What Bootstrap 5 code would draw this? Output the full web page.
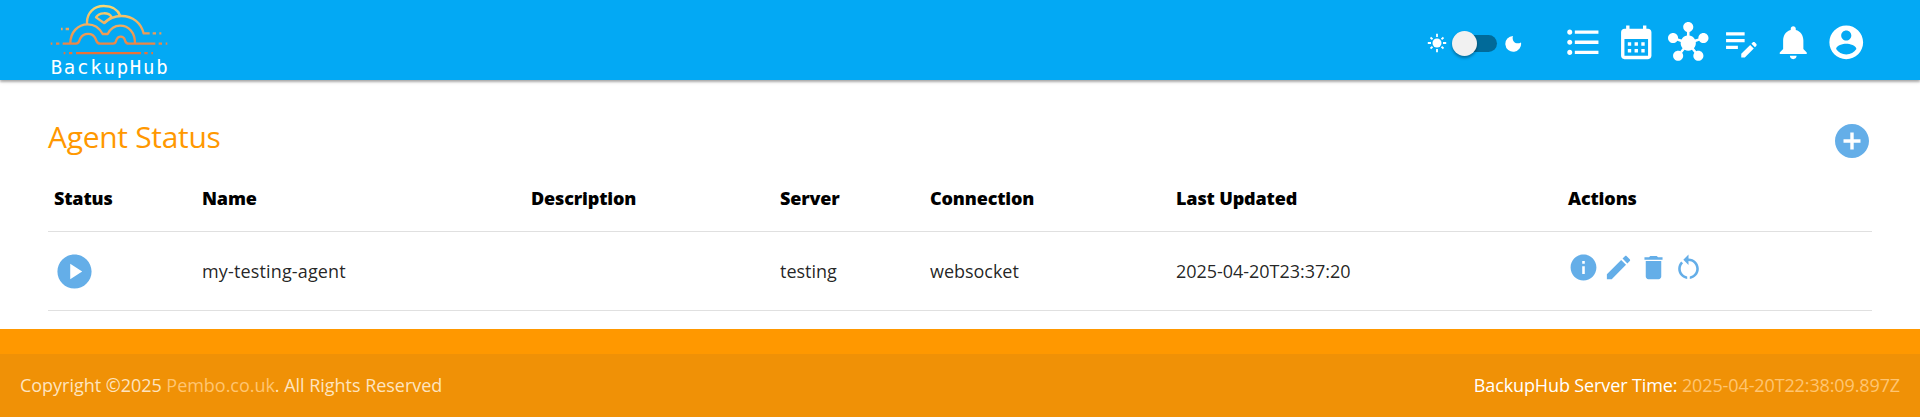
<!DOCTYPE html>
<html lang="en">
<head>
<meta charset="utf-8">
<meta name="viewport" content="width=device-width, initial-scale=1">
<title>BackupHub - Agent Status</title>
<link href="https://cdn.jsdelivr.net/npm/bootstrap@5.3.0/dist/css/bootstrap.min.css" rel="stylesheet">
<style>
  body { font-family: "Open Sans", "Noto Sans", sans-serif; font-size: 18px; line-height: 27px; letter-spacing: -.03px; color: rgba(0,0,0,.87); background: #fff; overflow: hidden; }
  svg { display: block; flex: none; }
  .topbar { height: 80px; background: #03a9f4; padding: 0 54px 0 30px; box-shadow: 0 2px 2px rgba(0,0,0,.2), 0 1px 4px rgba(0,0,0,.25); position: relative; }
  .mode-toggle { height: 26px; margin-right: 41px; margin-top: 6px; }
  .nav-icons { gap: 12px; margin-top: 4px; }
  .nav-icons svg { width: 40.5px; height: 40.5px; fill: #fff; }
  .track { width: 43px; height: 17px; border-radius: 9px; background: #016a99; margin: 0 8px 0 7px; }
  .knob { width: 25px; height: 25px; border-radius: 50%; background: #f1f1f1; box-shadow: 0 2px 3px rgba(0,0,0,.35); margin-left: -2px; flex: none; }
  .content-area { padding: 0 48px; height: 249px; }
  .title-row { height: 82px; padding: 1px 3px 0 0; }
  .page-title { font-size: 30px; line-height: 36px; font-weight: 400; letter-spacing: -.3px; color: #ff9800; margin: 31px 0 0; }
  .blue-icon { fill: #64aee8; }
  .agents { table-layout: fixed; width: 1824px; margin: 0; }
  .agents th, .agents td { padding: 0 6px; vertical-align: middle; border-bottom: 1px solid #e0e0e0; }
  .agents th { height: 69px; padding-top: 5px; font-weight: 800; letter-spacing: -.15px; color: #000; }
  .agents td { height: 79px; padding-top: 2px; }
  .agents .agent-name { letter-spacing: .15px; }
  .agents .actions { padding: 0 0 7px 6px; }
  .site-footer { height: 88px; padding-top: 25px; background: #ff9800; color: #fff; }
  .copy-row { height: 63px; padding: 0 20px; background: #f09106; }
  .server-time { letter-spacing: -.12px; }
  .dim { color: #fee4bf; }
  .pale, .pale:hover { color: #ffc571; text-decoration: none; }
</style>
</head>
<body>
<header class="topbar d-flex justify-content-between">
  <svg width="160" height="80" viewBox="0 0 480 240" role="img" aria-label="BackupHub">
    <defs>
      <linearGradient id="sunset" gradientUnits="userSpaceOnUse" x1="0" y1="15" x2="0" y2="160">
        <stop offset="0" stop-color="#f9da72"/><stop offset=".5" stop-color="#efa45c"/><stop offset="1" stop-color="#e87237"/>
      </linearGradient>
    </defs>
    <g fill="none" stroke="url(#sunset)" stroke-width="7" stroke-linejoin="round">
      <path d="M171 72V67C171 38 192 18 221 18C245 18 264 29 271 48"/>
      <path d="M198 52C207 36 236 36 245 51L222 69Z"/>
      <path d="M121 130C121 96 144 73 173 73C194 73 208 83 218 102H233C242 85 254 77 270 77C297 77 315 98 315 130"/>
      <path d="M222 70C238 54 254 48 274 48C310 48 333 70 341 100H359"/>
      <path d="M98 131H138C148 131 147 123 151 115C161 97 188 97 196 115C201 126 200 131 210 131H249C259 131 257 124 260 118C265 107 280 107 284 118C287 126 286 131 296 131H376"/>
      <path d="M62 131H67M78 131H88M386 131H396M407 131H412M93 87H98M107 87H117M368 100H378M388 100H394"/>
      <path d="M101 159.500H106M117 159.500H127M138 159.500H333M343 159.500H353M364 159.500H369"/>
    </g>
    <text x="62" y="221" textLength="351" fill="#fff" font-family="'DejaVu Sans Mono', monospace" font-size="57">BackupHub</text>
  </svg>
  <div class="d-flex align-items-center">
    <div class="mode-toggle d-flex align-items-center">
      <svg width="20" height="20" viewBox="0 0 20 20"><circle cx="10" cy="10" r="4.500" fill="#fff"/><path d="M10 .8V4M10 16v3.200M.8 10H4M16 10h3.200M3.500 4.500l2 1.700M16.500 4.500l-2 1.700M3.500 15.500l2-1.700M16.500 15.500l-2-1.700" stroke="#fff" stroke-width="1.800"/></svg>
      <div class="track d-flex align-items-center"><span class="knob"></span></div>
      <svg width="17" height="17" viewBox="0 0 17 17"><path d="M8 1C6.500 5 10 10.500 16 7.500A7.900 7.900 0 1 1 8 1Z" fill="#fff"/></svg>
    </div>
    <nav class="nav-icons d-flex">
      <svg viewBox="0 0 24 24"><path d="M4 10.500c-.83 0-1.500.67-1.500 1.500s.67 1.500 1.500 1.500 1.500-.67 1.500-1.500-.67-1.500-1.500-1.500zm0-6c-.83 0-1.500.67-1.500 1.500S3.170 7.500 4 7.500 5.500 6.830 5.500 6 4.830 4.500 4 4.500zm0 12c-.83 0-1.500.68-1.500 1.500s.68 1.500 1.500 1.500 1.500-.68 1.500-1.500-.67-1.500-1.500-1.500zM7 19h14v-2H7v2zm0-6h14v-2H7v2zm0-8v2h14V5H7z"/></svg>
      <svg viewBox="0 0 24 24"><path d="M19 4h-1V2h-2v2H8V2H6v2H5c-1.110 0-1.990.9-1.990 2L3 20c0 1.100.89 2 2 2h14c1.100 0 2-.9 2-2V6c0-1.100-.9-2-2-2zm0 16H5V10h14v10zM9 14H7v-2h2v2zm4 0h-2v-2h2v2zm4 0h-2v-2h2v2zm-8 4H7v-2h2v2zm4 0h-2v-2h2v2zm4 0h-2v-2h2v2z"/></svg>
      <svg viewBox="0 0 24 24"><path d="M8.400 18.200c.38.500.6 1.120.6 1.800 0 1.660-1.340 3-3 3s-3-1.340-3-3 1.340-3 3-3c.44 0 .85.09 1.230.26l1.410-1.770c-.92-1.030-1.290-2.390-1.090-3.690l-2.030-.68C4.980 11.950 4.060 12.500 3 12.500c-1.660 0-3-1.340-3-3s1.340-3 3-3 3 1.340 3 3c0 .07 0 .14-.01.21l2.030.68c.64-1.210 1.820-2.090 3.220-2.320V5.910C9.960 5.570 9 4.400 9 3c0-1.660 1.340-3 3-3s3 1.340 3 3c0 1.400-.96 2.570-2.250 2.910v2.160c1.400.23 2.580 1.110 3.220 2.320l2.030-.68C18 9.640 18 9.570 18 9.500c0-1.660 1.340-3 3-3s3 1.340 3 3-1.340 3-3 3c-1.060 0-1.980-.55-2.520-1.370l-2.030.68c.2 1.290-.16 2.650-1.090 3.690l1.410 1.770c.38-.18.79-.27 1.230-.27 1.660 0 3 1.340 3 3s-1.340 3-3 3-3-1.340-3-3c0-.68.22-1.300.6-1.800l-1.410-1.770c-1.350.75-3.010.76-4.370 0L8.400 18.200z"/></svg>
      <svg viewBox="0 0 24 24"><path d="M3 10h11v2H3v-2zm0-2h11V6H3v2zm0 8h7v-2H3v2zm15.010-3.130.71-.71c.39-.39 1.020-.39 1.410 0l.71.71c.39.39.39 1.020 0 1.410l-.71.71-2.120-2.120zm-.71.71-5.300 5.300V21h2.120l5.300-5.300-2.120-2.120z"/></svg>
      <svg viewBox="0 0 24 24"><path d="M12 22c1.100 0 2-.9 2-2h-4c0 1.100.89 2 2 2zm6-6v-5c0-3.070-1.640-5.640-4.500-6.320V4c0-.83-.67-1.500-1.500-1.500s-1.500.67-1.500 1.500v.68C7.630 5.360 6 7.920 6 11v5l-2 2v1h16v-1l-2-2z"/></svg>
      <svg viewBox="0 0 24 24"><path d="M12 2C6.480 2 2 6.480 2 12s4.480 10 10 10 10-4.480 10-10S17.520 2 12 2zm0 3c1.660 0 3 1.340 3 3s-1.340 3-3 3-3-1.340-3-3 1.340-3 3-3zm0 14.200c-2.500 0-4.710-1.280-6-3.220.03-1.990 4-3.080 6-3.080 1.990 0 5.970 1.090 6 3.080-1.290 1.940-3.500 3.220-6 3.220z"/></svg>
    </nav>
  </div>
</header>

<main class="content-area">
  <div class="title-row d-flex justify-content-between">
    <h1 class="page-title align-self-center">Agent Status</h1>
    <svg class="blue-icon mt-auto" width="34" height="38" viewBox="2 2 20 22.350"><path d="M12 2C6.480 2 2 6.480 2 12s4.480 10 10 10 10-4.480 10-10S17.520 2 12 2zm5 11h-4v4h-2v-4H7v-2h4V7h2v4h4v2z"/></svg>
  </div>
  <table class="agents">
    <colgroup><col width="148"><col width="329"><col width="249"><col width="150"><col width="246"><col width="392"><col width="310"></colgroup>
    <thead>
      <tr><th>Status</th><th>Name</th><th>Description</th><th>Server</th><th>Connection</th><th>Last Updated</th><th>Actions</th></tr>
    </thead>
    <tbody>
      <tr>
        <td><svg class="blue-icon" width="41" height="41" viewBox="0 0 24 24"><path d="M12 2C6.480 2 2 6.480 2 12s4.480 10 10 10 10-4.480 10-10S17.520 2 12 2zm-2.500 14.500v-9l7 4.500-7 4.500z"/></svg></td>
        <td class="agent-name">my-testing-agent</td><td></td><td>testing</td><td>websocket</td><td>2025-04-20T23:37:20</td>
        <td class="actions">
          <div class="d-flex gap-1">
            <svg class="blue-icon" width="31" height="31" viewBox="0 0 24 24"><path d="M12 2C6.480 2 2 6.480 2 12s4.480 10 10 10 10-4.480 10-10S17.520 2 12 2zm1 15h-2v-6h2v6zm0-8h-2V7h2v2z"/></svg>
            <svg class="blue-icon" width="31" height="31" viewBox="0 0 24 24"><path d="M3 17.250V21h3.750L17.810 9.940l-3.750-3.750L3 17.250zM20.710 7.040c.39-.39.39-1.020 0-1.410l-2.340-2.340c-.39-.39-1.020-.39-1.410 0l-1.830 1.830 3.750 3.750 1.830-1.830z"/></svg>
            <svg class="blue-icon" width="31" height="31" viewBox="0 0 24 24"><path d="M6 19c0 1.100.9 2 2 2h8c1.100 0 2-.9 2-2V7H6v12zM19 4h-3.500l-1-1h-5l-1 1H5v2h14V4z"/></svg>
            <svg class="blue-icon" width="31" height="31" viewBox="0 0 24 24"><path d="M12 5V2L8 6l4 4V7c3.310 0 6 2.690 6 6 0 2.970-2.170 5.430-5 5.910v2.020c3.950-.49 7-3.850 7-7.930 0-4.420-3.580-8-8-8zm-6 8c0-1.650.67-3.150 1.760-4.240L6.340 7.340C4.900 8.790 4 10.790 4 13c0 4.080 3.050 7.440 7 7.930v-2.020c-2.830-.48-5-2.940-5-5.910z"/></svg>
          </div>
        </td>
      </tr>
    </tbody>
  </table>
</main>

<footer class="site-footer">
  <div class="copy-row d-flex justify-content-between align-items-center">
    <div class="dim">Copyright ©2025 <a class="pale" href="#">Pembo.co.uk</a>. All Rights Reserved</div>
    <div class="server-time">BackupHub Server Time: <span class="pale">2025-04-20T22:38:09.897Z</span></div>
  </div>
</footer>
<script src="https://cdn.jsdelivr.net/npm/bootstrap@5.3.0/dist/js/bootstrap.bundle.min.js"></script>
</body>
</html>
